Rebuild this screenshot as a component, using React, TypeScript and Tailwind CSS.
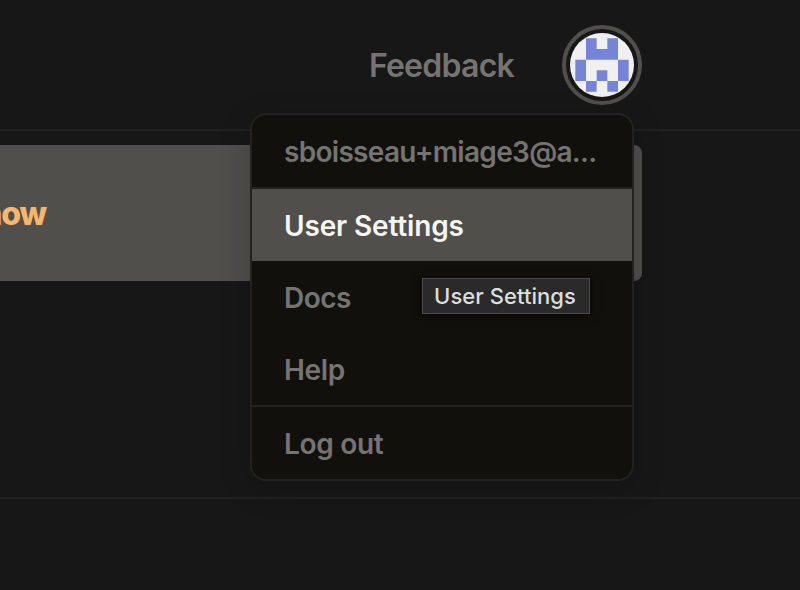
function Identicon() {
  return (
    <svg viewBox="0 0 12 12" className="size-16 rounded-full bg-[#f0f0f0]">
      <path
        fill="#7584d4"
        d="M3 1h2v2h2V1h2v4H3zM1 5h2v4H1zM9 5h2v4H9zM5 7h2v2H5zM3 9h2v2H3zM7 9h2v2H7z"
      />
    </svg>
  );
}

function UserMenu() {
  return (
    <div className="absolute left-[250px] top-[113px] w-96 overflow-hidden rounded-2xl border-2 border-[#22221e] bg-[#11100c] text-[28px] leading-[72px] font-semibold text-[#757472] shadow-[0_8px_32px_rgba(0,0,0,0.2)]">
      <div className="h-[74px] border-b-2 border-[#22221e] px-8 pt-px tracking-[-0.7px] whitespace-nowrap">sboisseau+miage3@a...</div>
      <div className="h-[72px] bg-[#504f4c] px-8 pt-px tracking-[-0.15px] text-[#f5f5f4]">User Settings</div>
      <div className="h-[72px] px-8 pt-px tracking-[-0.5px]">Docs</div>
      <div className="h-[72px] px-8 pt-px tracking-[-0.3px]">Help</div>
      <div className="h-[74px] border-t-2 border-[#22221e] px-8 pt-px tracking-[-0.3px]">Log out</div>
    </div>
  );
}

export default function App() {
  return (
    <div className="relative flex h-[590px] w-[800px] flex-col overflow-hidden bg-[#171717] font-['Inter',sans-serif]">
      <header className="flex h-[131px] shrink-0 items-center justify-end gap-12 border-b-2 border-[#22221f] pr-[158px]">
        <span className="pt-0.5 text-[32px] leading-10 font-semibold tracking-[-0.75px] text-[#757472]">Feedback</span>
        <div className="flex size-20 items-center justify-center rounded-full border-4 border-[#504f4c]">
          <Identicon />
        </div>
      </header>
      <main className="h-[368px] shrink-0 border-b-2 border-[#22221f] pt-3.5">
        <div className="flex h-[136px] w-[642px] items-center rounded-r-lg bg-[#504f4c]">
          <div className="flex w-[46px] justify-end pt-0.5 text-[32px] font-extrabold tracking-[-1.1px] text-[#f6b66c]">
            <span>now</span>
          </div>
        </div>
      </main>
      <UserMenu />
      <div className="absolute left-[422px] top-[278px] flex h-9 w-[168px] items-center justify-center border border-[#4b4b4b] bg-[#2a2a2a] pr-0.5 text-[22px] font-medium tracking-[0.05px] whitespace-nowrap text-[#dedede] shadow-[0_2px_8px_rgba(0,0,0,0.6)]">
        User Settings
      </div>
    </div>
  );
}
